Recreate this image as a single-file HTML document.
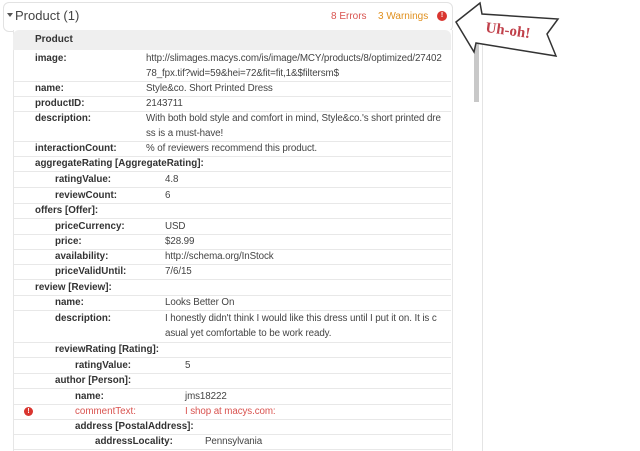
<!DOCTYPE html>
<html><head><style>
html,body{margin:0;width:640px;height:451px;overflow:hidden}
body{background:#fff;position:relative;font-family:"Liberation Sans",Arial,sans-serif;color:#333}
.card{position:absolute;left:3px;top:2px;width:448px;height:28px;border:1px solid #e2e2e2;border-radius:6px;background:#fff}
.t{position:absolute;left:13px;top:30px;width:438px;height:430px;border-left:1px solid #e6e6e6;border-right:1px solid #e6e6e6;background:#fff}
.hd{position:absolute;left:13px;top:30px;width:438px;height:20px;background:#efefef;border-radius:6px 6px 0 0}
.r{position:absolute;left:14px;width:437px;border-bottom:1px solid #e8e8e8;font-size:9.8px;line-height:15.4px}
.r b{position:absolute;color:#333;white-space:nowrap}
.r span{position:absolute;color:#444;white-space:nowrap;letter-spacing:-0.1px}
.err b,.err span{color:#d9534f;font-weight:normal}
.ic{position:absolute;width:9px;height:9px;border-radius:50%;background:#d9352f;color:#fff;font-size:7px;line-height:9px;text-align:center;font-weight:bold}
</style></head><body>
<div class="card">
<div style="position:absolute;left:3px;top:10px;width:0;height:0;border-left:3px solid transparent;border-right:3px solid transparent;border-top:4px solid #555"></div>
<div style="position:absolute;left:11px;top:5px;font-size:13px;color:#444">Product (1)</div>
<div style="position:absolute;left:327px;top:8px;font-size:10px;color:#d9534f">8 Errors</div>
<div style="position:absolute;left:374px;top:8px;font-size:10px;color:#e0901e">3 Warnings</div>
<div class="ic" style="left:433px;top:8px;width:10px;height:10px;line-height:10px">!</div>
</div>
<div class="t"></div>
<div class="hd"></div>
<div style="position:absolute;left:35px;top:34px;font-size:10px;font-weight:bold;color:#333">Product</div>
<div style="position:absolute;left:474px;top:30px;width:5px;height:72px;background:#c8c8c8"></div>
<div style="position:absolute;left:482px;top:40px;width:1px;height:411px;background:#e4e4e4"></div>

<div class="r" style="top:51px;height:30px"><b style="left:21px">image:</b><span style="left:132px">http://slimages.macys.com/is/image/MCY/products/8/optimized/27402<br>78_fpx.tif?wid=59&amp;hei=72&amp;fit=fit,1&amp;$filtersm$</span></div>
<div class="r" style="top:81px;height:15px"><b style="left:21px">name:</b><span style="left:132px">Style&amp;co. Short Printed Dress</span></div>
<div class="r" style="top:96px;height:15px"><b style="left:21px">productID:</b><span style="left:132px">2143711</span></div>
<div class="r" style="top:111px;height:30px"><b style="left:21px">description:</b><span style="left:132px">With both bold style and comfort in mind, Style&amp;co.'s short printed dre<br>ss is a must-have!</span></div>
<div class="r" style="top:141px;height:15px"><b style="left:21px">interactionCount:</b><span style="left:132px">% of reviewers recommend this product.</span></div>
<div class="r" style="top:156px;height:15px"><b style="left:21px">aggregateRating [AggregateRating]:</b></div>
<div class="r" style="top:172px;height:15px"><b style="left:41px">ratingValue:</b><span style="left:151px">4.8</span></div>
<div class="r" style="top:188px;height:15px"><b style="left:41px">reviewCount:</b><span style="left:151px">6</span></div>
<div class="r" style="top:203px;height:15px"><b style="left:21px">offers [Offer]:</b></div>
<div class="r" style="top:219px;height:15px"><b style="left:41px">priceCurrency:</b><span style="left:151px">USD</span></div>
<div class="r" style="top:234px;height:15px"><b style="left:41px">price:</b><span style="left:151px">$28.99</span></div>
<div class="r" style="top:249px;height:15px"><b style="left:41px">availability:</b><span style="left:151px">http://schema.org/InStock</span></div>
<div class="r" style="top:264px;height:15px"><b style="left:41px">priceValidUntil:</b><span style="left:151px">7/6/15</span></div>
<div class="r" style="top:280px;height:15px"><b style="left:21px">review [Review]:</b></div>
<div class="r" style="top:295px;height:15px"><b style="left:41px">name:</b><span style="left:151px">Looks Better On</span></div>
<div class="r" style="top:311px;height:31px"><b style="left:41px">description:</b><span style="left:151px">I honestly didn't think I would like this dress until I put it on. It is c<br>asual yet comfortable to be work ready.</span></div>
<div class="r" style="top:342px;height:15px"><b style="left:41px">reviewRating [Rating]:</b></div>
<div class="r" style="top:358px;height:15px"><b style="left:61px">ratingValue:</b><span style="left:171px">5</span></div>
<div class="r" style="top:373px;height:15px"><b style="left:41px">author [Person]:</b></div>
<div class="r" style="top:389px;height:15px"><b style="left:61px">name:</b><span style="left:171px">jms18222</span></div>
<div class="r err" style="top:404px;height:15px"><b style="left:61px">commentText:</b><span style="left:171px">I shop at macys.com:</span></div>
<div class="ic" style="left:24px;top:407px">!</div>
<div class="r" style="top:419px;height:15px"><b style="left:61px">address [PostalAddress]:</b></div>
<div class="r" style="top:434px;height:15px"><b style="left:81px">addressLocality:</b><span style="left:191px">Pennsylvania</span></div>

<svg style="position:absolute;left:0;top:0" width="640" height="451">
<polygon points="456,22 480,3 482,14 558,19 547,34 556,56 476,43 474,52" fill="#fff" stroke="#333" stroke-width="1.5" stroke-linejoin="miter"/>
<text x="508" y="35" transform="rotate(8 508 30)" text-anchor="middle" font-family="Liberation Serif,serif" font-weight="bold" font-size="15" fill="#c0404a">Uh-oh!</text>
</svg>
</body></html>
